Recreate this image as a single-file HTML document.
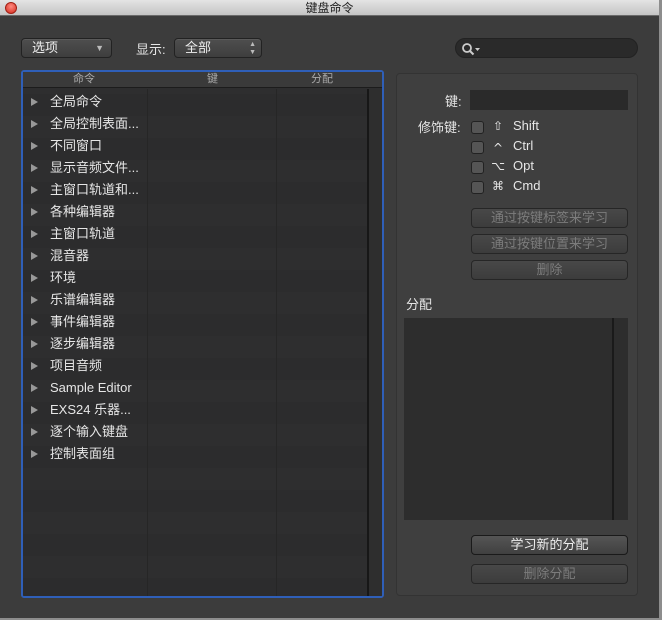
<!DOCTYPE html><html><head><meta charset="utf-8"><style>
*{box-sizing:border-box;margin:0;padding:0}
body{width:662px;height:620px;background:#8d8d8d;font-family:"Liberation Sans","Noto Sans CJK SC",sans-serif;position:relative;overflow:hidden;font-size:13px;color:#e6e6e6}
.win{position:absolute;left:0;top:0;width:659px;height:618px;background:#3c3c3c}
.title{position:absolute;left:0;top:0;width:659px;height:16px;background:linear-gradient(#e4e4e4,#c4c4c4);border-bottom:1px solid #6a6a6a;color:#222;font-size:12px;text-align:center;line-height:16px}
.close{position:absolute;left:5px;top:2px;width:12px;height:12px;border-radius:50%;background:radial-gradient(circle at 50% 35%,#ff8a80,#d42a1c);border:1px solid #a02015}
.pop{position:absolute;height:20px;border:1px solid #222;border-radius:4px;background:linear-gradient(#4e4e4e,#3e3e3e);box-shadow:inset 0 1px 0 #5a5a5a;color:#eee;line-height:18px;padding-left:10px}
.abs{position:absolute}
.list{position:absolute;left:21px;top:70px;width:363px;height:528px;border:2px solid #2f5fb8;border-radius:3px;background:#2e2e2f;overflow:hidden}
.hdr{position:absolute;left:0;top:0;width:100%;height:16px;background:#3a3a3a;border-bottom:1px solid #1c1c1c;color:#aaa;font-size:11px;line-height:15px}
.row{position:absolute;left:0;width:344px;height:22px;font-size:13px;line-height:22px}
.tri{position:absolute;left:8px;top:7px;width:0;height:0;border-left:7px solid #999;border-top:4.5px solid transparent;border-bottom:4.5px solid transparent}
.btn{position:absolute;left:471px;width:157px;height:20px;border:1px solid #262626;border-radius:4px;background:linear-gradient(#484848,#3c3c3c);color:#7c7c7c;text-align:center;line-height:18px;font-size:13px}
.cb{position:absolute;left:471px;width:13px;height:13px;border:1px solid #222;border-radius:3px;background:#555}
.ml{position:absolute;left:513px;font-size:13px;line-height:16px;height:16px}
.sym{position:absolute;left:491px;width:14px;height:16px;font-size:12px;line-height:16px;text-align:center;font-family:"DejaVu Sans",sans-serif}
</style></head><body><div class="win">
<div class="title">键盘命令</div><div class="close"></div>
<div class="pop" style="left:21px;top:38px;width:91px">选项<span class="abs" style="right:7px;top:0;font-size:9px;color:#bbb">▼</span></div>
<div class="abs" style="left:136px;top:39px">显示:</div>
<div class="pop" style="left:174px;top:38px;width:88px">全部<span class="abs" style="right:5px;top:-1px;font-size:7px;line-height:8px;color:#bbb;padding-top:3px">▲<br>▼</span></div>
<div class="abs" style="left:455px;top:38px;width:183px;height:20px;border-radius:10px;background:#2a2a2a;border:1px solid #222">
<svg class="abs" style="left:5px;top:3px" width="20" height="14"><circle cx="6" cy="6" r="4" fill="none" stroke="#ccc" stroke-width="1.8"/><path d="M9 9l3.5 3.5" stroke="#ccc" stroke-width="2"/><path d="M14 6h5l-2.5 3z" fill="#ccc"/></svg></div>
<div class="list">
<div class="abs" style="left:0;top:0;width:100%;height:100%;background:repeating-linear-gradient(#2e2e2f 0 22px,#2c2c2d 22px 44px)"></div>
<div class="hdr"><span class="abs" style="left:50px">命令</span><span class="abs" style="left:184px">键</span><span class="abs" style="left:288px">分配</span></div>
<div class="abs" style="left:124px;top:17px;width:1px;height:520px;background:#262626"></div>
<div class="abs" style="left:253px;top:17px;width:1px;height:520px;background:#262626"></div>
<div class="abs" style="left:344px;top:17px;width:2px;height:520px;background:#171717"></div>
<div class="abs" style="left:346px;top:17px;width:17px;height:520px;background:#2e2e2e"></div>
<div id="rows"></div>
</div>
<div class="abs" style="left:396px;top:73px;width:242px;height:523px;border:1px solid #333;border-radius:4px;background:#3f3f3f"></div>
<div class="abs" style="left:445px;top:91px">键:</div>
<div class="abs" style="left:470px;top:90px;width:158px;height:20px;background:#2a2a2a"></div>
<div class="abs" style="left:418px;top:117px">修饰键:</div>
<div class="cb" style="top:121px"></div><div class="sym" style="top:118px">⇧</div><div class="ml" style="top:118px">Shift</div>
<div class="cb" style="top:141px"></div><div class="sym" style="top:140px">^</div><div class="ml" style="top:138px">Ctrl</div>
<div class="cb" style="top:161px"></div><div class="sym" style="top:158px">⌥</div><div class="ml" style="top:158px">Opt</div>
<div class="cb" style="top:181px"></div><div class="sym" style="top:178px">⌘</div><div class="ml" style="top:178px">Cmd</div>
<div class="btn" style="top:208px">通过按键标签来学习</div>
<div class="btn" style="top:234px">通过按键位置来学习</div>
<div class="btn" style="top:260px">删除</div>
<div class="abs" style="left:406px;top:294px">分配</div>
<div class="abs" style="left:404px;top:318px;width:224px;height:202px;background:#2d2d2d"></div>
<div class="abs" style="left:612px;top:318px;width:2px;height:202px;background:#1a1a1a"></div>
<div class="btn" style="top:535px;color:#eee;border-color:#1a1a1a;background:linear-gradient(#555,#404040)">学习新的分配</div>
<div class="btn" style="top:564px">删除分配</div>
</div>
<script>
var n=["全局命令","全局控制表面...","不同窗口","显示音频文件...","主窗口轨道和...","各种编辑器","主窗口轨道","混音器","环境","乐谱编辑器","事件编辑器","逐步编辑器","项目音频","Sample Editor","EXS24 乐器...","逐个输入键盘","控制表面组"],h="";
n.forEach(function(t,i){h+='<div class="row" style="top:'+(19+i*22)+'px"><div class="tri"></div><span class="abs" style="left:27px">'+t+'</span></div>'});
document.getElementById("rows").innerHTML=h;
</script>
</body></html>
